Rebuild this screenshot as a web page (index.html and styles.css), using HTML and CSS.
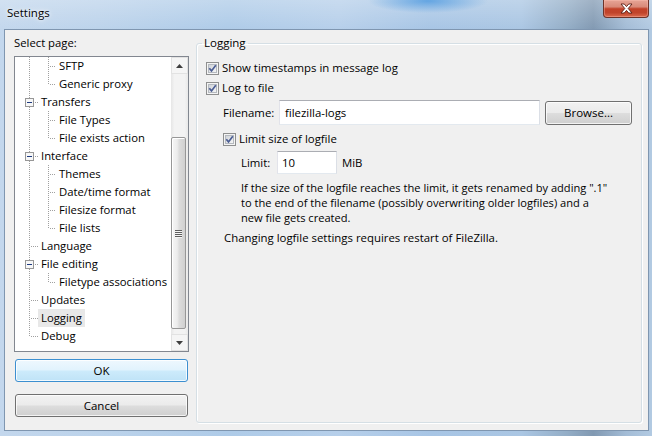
FILE: index.html
```html
<!DOCTYPE html>
<html>
<head>
<meta charset="utf-8">
<title>Settings</title>
<link rel="stylesheet" href="styles.css">
</head>
<body>
<div class="window">
  <div class="titlebar">
    <span class="title">Settings</span>
    <div class="close-btn">
      <svg width="13" height="11" viewBox="0 0 13 11"><path d="M1 1 H4.3 L6.5 3.6 L8.7 1 H12 L8.2 5.5 L12 10 H8.7 L6.5 7.4 L4.3 10 H1 L4.8 5.5 Z" fill="#fff" stroke="#5a1d14" stroke-width="0.9" stroke-linejoin="round"/></svg>
    </div>
  </div>
  <div class="client">
    <div class="left">
      <div class="caption">Select page:</div>
      <div class="tree">
        <div class="tree-items">
          <div class="row"><span class="g0 v"></span><span class="g1 t"></span><span class="item">SFTP</span></div>
          <div class="row"><span class="g0 v"></span><span class="g1 l"></span><span class="item">Generic proxy</span></div>
          <div class="row"><span class="g0 t"><svg class="exp" width="9" height="9" viewBox="0 0 9 9"><rect x=".5" y=".5" width="8" height="8" fill="#f7f7f7" stroke="#979797"/><path d="M2 4.5 H7" stroke="#1d3a80"/></svg></span><span class="item">Transfers</span></div>
          <div class="row"><span class="g0 v"></span><span class="g1 t"></span><span class="item">File Types</span></div>
          <div class="row"><span class="g0 v"></span><span class="g1 l"></span><span class="item">File exists action</span></div>
          <div class="row"><span class="g0 t"><svg class="exp" width="9" height="9" viewBox="0 0 9 9"><rect x=".5" y=".5" width="8" height="8" fill="#f7f7f7" stroke="#979797"/><path d="M2 4.5 H7" stroke="#1d3a80"/></svg></span><span class="item">Interface</span></div>
          <div class="row"><span class="g0 v"></span><span class="g1 t"></span><span class="item">Themes</span></div>
          <div class="row"><span class="g0 v"></span><span class="g1 t"></span><span class="item">Date/time format</span></div>
          <div class="row"><span class="g0 v"></span><span class="g1 t"></span><span class="item">Filesize format</span></div>
          <div class="row"><span class="g0 v"></span><span class="g1 l"></span><span class="item">File lists</span></div>
          <div class="row"><span class="g0 t"></span><span class="item">Language</span></div>
          <div class="row"><span class="g0 t"><svg class="exp" width="9" height="9" viewBox="0 0 9 9"><rect x=".5" y=".5" width="8" height="8" fill="#f7f7f7" stroke="#979797"/><path d="M2 4.5 H7" stroke="#1d3a80"/></svg></span><span class="item">File editing</span></div>
          <div class="row"><span class="g0 v"></span><span class="g1 l"></span><span class="item">Filetype associations</span></div>
          <div class="row"><span class="g0 t"></span><span class="item">Updates</span></div>
          <div class="row"><span class="g0 t"></span><span class="item selected">Logging</span></div>
          <div class="row"><span class="g0 l"></span><span class="item">Debug</span></div>
        </div>
        <div class="vscroll">
          <div class="sb-btn"><svg width="7" height="4" viewBox="0 0 7 4"><path d="M3.5 0 L7 4 H0 Z" fill="#3e3e3e"/></svg></div>
          <div class="sb-track">
            <div class="sb-thumb"><span class="grip"></span></div>
          </div>
          <div class="sb-btn"><svg width="7" height="4" viewBox="0 0 7 4"><path d="M0 0 H7 L3.5 4 Z" fill="#3e3e3e"/></svg></div>
        </div>
      </div>
      <button class="btn btn-default ok">OK</button>
      <button class="btn cancel">Cancel</button>
    </div>
    <fieldset class="group">
      <legend>Logging</legend>
      <div class="group-body">
        <div class="chk-row">
          <svg class="cb" width="13" height="13" viewBox="0 0 13 13"><defs><linearGradient id="cbg" x1="0" y1="0" x2="1" y2="1"><stop offset="0" stop-color="#cdd1d6"/><stop offset="1" stop-color="#f8f8f8"/></linearGradient></defs><rect x=".5" y=".5" width="12" height="12" fill="#f4f4f4" stroke="#8e8f8f"/><rect x="2.5" y="2.5" width="8" height="8" fill="url(#cbg)" stroke="#b5b9bf"/><path d="M3.3 6.3 L5.5 8.9 L9.8 3.3" fill="none" stroke="#4b5d93" stroke-width="1.7"/></svg>
          <span>Show timestamps in message log</span>
        </div>
        <div class="chk-row">
          <svg class="cb" width="13" height="13" viewBox="0 0 13 13"><rect x=".5" y=".5" width="12" height="12" fill="#f4f4f4" stroke="#8e8f8f"/><rect x="2.5" y="2.5" width="8" height="8" fill="url(#cbg)" stroke="#b5b9bf"/><path d="M3.3 6.3 L5.5 8.9 L9.8 3.3" fill="none" stroke="#4b5d93" stroke-width="1.7"/></svg>
          <span>Log to file</span>
        </div>
        <div class="file-row">
          <span class="file-label">Filename:</span>
          <span class="input file-input">filezilla-logs</span>
          <button class="btn browse">Browse...</button>
        </div>
        <div class="chk-row sub">
          <svg class="cb" width="13" height="13" viewBox="0 0 13 13"><rect x=".5" y=".5" width="12" height="12" fill="#f4f4f4" stroke="#8e8f8f"/><rect x="2.5" y="2.5" width="8" height="8" fill="url(#cbg)" stroke="#b5b9bf"/><path d="M3.3 6.3 L5.5 8.9 L9.8 3.3" fill="none" stroke="#4b5d93" stroke-width="1.7"/></svg>
          <span>Limit size of logfile</span>
        </div>
        <div class="limit-row">
          <span class="limit-label">Limit:</span>
          <span class="input limit-input">10</span>
          <span class="unit">MiB</span>
        </div>
        <p class="note">If the size of the logfile reaches the limit, it gets renamed by adding ".1"<br>to the end of the filename (possibly overwriting older logfiles) and a<br>new file gets created.</p>
        <p class="restart">Changing logfile settings requires restart of FileZilla.</p>
      </div>
    </fieldset>
  </div>
</div>
</body>
</html>
```

FILE: styles.css
```css
html, body {
  margin: 0;
  padding: 0;
}

body {
  width: 652px;
  height: 436px;
  overflow: hidden;
  font-family: "Open Sans", "Noto Sans", "DejaVu Sans", sans-serif;
  font-size: 11px;
  color: #000;
}

.window {
  width: 652px;
  height: 436px;
  display: flex;
  flex-direction: column;
  background:
    radial-gradient(ellipse 60px 12px at 428px 1px, rgba(90, 160, 225, 0.9), rgba(90, 160, 225, 0)),
    linear-gradient(to bottom, rgba(255, 255, 255, 0.25), rgba(255, 255, 255, 0) 30px),
    linear-gradient(to right, #c3d7ed 0%, #bcd3eb 15%, #aecbe8 35%, #b6cfea 52%, #a7c5e5 66%, #aac6e3 80%, #93adc6 87%, #8199b2 91%, #a3bcd6 96%, #b2cae2 100%);
}

.titlebar {
  height: 29px;
  flex: none;
  display: flex;
  align-items: flex-start;
}

.title {
  margin: 5px 0 0 7px;
  line-height: 16px;
  font-size: 11.5px;
  text-shadow: 0 0 6px rgba(255, 255, 255, 0.9), 0 0 3px rgba(255, 255, 255, 0.9);
}

.close-btn {
  margin-left: auto;
  margin-right: 3px;
  width: 46px;
  height: 18px;
  box-sizing: border-box;
  border: 1px solid #6d3329;
  border-top: none;
  border-radius: 0 0 4px 4px;
  background: linear-gradient(to bottom, #e7a596 0%, #d98a79 40%, #c24128 52%, #c0442b 75%, #dc6a4d 100%);
  box-shadow: inset 0 0 0 1px rgba(255, 200, 190, 0.35);
  display: flex;
  align-items: center;
  justify-content: center;
}

.client {
  margin: 0 3px 0 4px;
  height: 402px;
  box-sizing: border-box;
  border: 1px solid #7f96b0;
  background: #f0f0f0;
  display: flex;
  align-items: flex-start;
}

.left {
  width: 175px;
  margin-left: 9px;
  padding-top: 5px;
  display: flex;
  flex-direction: column;
  flex: none;
}

.caption {
  line-height: 16px;
  height: 16px;
  font-size: 11.3px;
}

.tree {
  margin-top: 5px;
  height: 296px;
  box-sizing: border-box;
  border: 1px solid #828790;
  background: #fff;
  display: flex;
}

.tree-items {
  width: 156px;
  overflow: hidden;
  flex: none;
}

.row {
  height: 18px;
  display: flex;
  align-items: center;
}

.g0, .g1 {
  height: 18px;
  flex: none;
  display: flex;
  align-items: center;
}

.g0 { width: 23px; }
.g1 { width: 18px; }

.g0.v {
  background: repeating-linear-gradient(to bottom, #a0a0a0 0 1px, transparent 1px 2px) 14px 0 / 1px 18px no-repeat;
}

.g0.t {
  background:
    repeating-linear-gradient(to bottom, #a0a0a0 0 1px, transparent 1px 2px) 14px 0 / 1px 18px no-repeat,
    repeating-linear-gradient(to right, #a0a0a0 0 1px, transparent 1px 2px) 16px 9px / 7px 1px no-repeat;
}

.g0.l {
  background:
    repeating-linear-gradient(to bottom, #a0a0a0 0 1px, transparent 1px 2px) 14px 0 / 1px 10px no-repeat,
    repeating-linear-gradient(to right, #a0a0a0 0 1px, transparent 1px 2px) 16px 9px / 7px 1px no-repeat;
}

.g1.t {
  background:
    repeating-linear-gradient(to bottom, #a0a0a0 0 1px, transparent 1px 2px) 10px 0 / 1px 18px no-repeat,
    repeating-linear-gradient(to right, #a0a0a0 0 1px, transparent 1px 2px) 12px 9px / 6px 1px no-repeat;
}

.g1.l {
  background:
    repeating-linear-gradient(to bottom, #a0a0a0 0 1px, transparent 1px 2px) 10px 0 / 1px 10px no-repeat,
    repeating-linear-gradient(to right, #a0a0a0 0 1px, transparent 1px 2px) 12px 9px / 6px 1px no-repeat;
}

.exp {
  margin-left: 10px;
  display: block;
}

.item {
  padding: 0 3px;
  line-height: 18px;
  height: 18px;
  white-space: nowrap;
  font-size: 11.3px;
}

.item.selected {
  background: #e8e8e8;
}

.vscroll {
  width: 17px;
  flex: none;
  display: flex;
  flex-direction: column;
  background: linear-gradient(to right, #e6e6e6 0%, #f3f3f3 20%, #f3f3f3 80%, #e9e9e9 100%);
}

.sb-btn {
  height: 17px;
  box-sizing: border-box;
  border: 1px solid #e2e2e2;
  background: #f5f5f5;
  display: flex;
  align-items: center;
  justify-content: center;
  flex: none;
}

.sb-track {
  flex: 1;
  display: flex;
  flex-direction: column;
}

.sb-thumb {
  margin: 63px 2px 0 0;
  height: 192px;
  box-sizing: border-box;
  border: 1px solid #979797;
  border-radius: 2px;
  background: linear-gradient(to right, #f6f6f6 0%, #ececec 40%, #dcdcdc 55%, #d0d0d0 100%);
  box-shadow: inset 1px 1px 0 #fff;
  display: flex;
  align-items: center;
  justify-content: center;
}

.grip {
  width: 7px;
  height: 8px;
  margin-top: 2px;
  background: repeating-linear-gradient(to bottom, #5e5e5e 0 1px, #f4f4f4 1px 2px);
}

.btn {
  font-family: inherit;
  font-size: 11.5px;
  color: #000;
  height: 23px;
  padding: 0;
  box-sizing: border-box;
  border: 1px solid #707070;
  border-radius: 3px;
  background: linear-gradient(to bottom, #f2f2f2 0%, #ebebeb 48%, #dddddd 52%, #cfcfcf 100%);
  box-shadow: inset 0 0 0 1px rgba(255, 255, 255, 0.75);
}

.btn-default {
  border-color: #3c8fd0;
  background: linear-gradient(to bottom, #eef8fe 0%, #e1f3fd 48%, #cdebfb 52%, #bfe3f7 100%);
  box-shadow: inset 0 0 0 1px rgba(255, 255, 255, 0.8);
}

.ok {
  margin-top: 7px;
  width: 173px;
  margin-left: 1px;
}

.cancel {
  margin-top: 12px;
  width: 173px;
  margin-left: 1px;
}

.group {
  margin: 5px 0 0 7px;
  padding: 0;
  width: 446px;
  height: 388px;
  box-sizing: border-box;
  border: 1px solid #d5dfe5;
  border-radius: 3px;
  box-shadow: inset 1px 1px 0 #fff, 1px 1px 0 #fff;
  min-width: 0;
}

.group legend {
  margin-left: 5px;
  padding: 0 2px;
  line-height: 16px;
  font-size: 11.5px;
}

.group-body {
  padding: 9px 0 0 9px;
}

.chk-row {
  display: flex;
  align-items: center;
  gap: 3px;
  height: 16px;
  margin-bottom: 4px;
  line-height: 16px;
  font-size: 11.4px;
}

.cb {
  display: block;
  flex: none;
}

.chk-row.sub {
  padding-left: 17px;
  margin-top: 6px;
}

.file-row {
  display: flex;
  align-items: center;
  height: 25px;
  padding-left: 17px;
  font-size: 11.4px;
}

.file-label {
  width: 56px;
  flex: none;
}

.input {
  box-sizing: border-box;
  background: #fff;
  border: 1px solid;
  border-color: #abadb3 #dbdfe6 #e3e9ef #e2e3ea;
  display: flex;
  align-items: center;
  font-size: 11.4px;
}

.file-input {
  width: 261px;
  height: 25px;
  padding-left: 5px;
}

.browse {
  margin-left: 5px;
  width: 87px;
  height: 24px;
}

.limit-row {
  display: flex;
  align-items: center;
  height: 23px;
  padding-left: 35px;
  font-size: 11.4px;
}

.limit-label {
  width: 36px;
  flex: none;
}

.limit-input {
  width: 60px;
  height: 23px;
  padding-left: 4px;
}

.unit {
  margin-left: 5px;
}

.note {
  margin: 6px 0 0 0;
  padding-left: 35px;
  line-height: 15px;
  font-size: 11.1px;
  white-space: nowrap;
}

.restart {
  margin: 5px 0 0 0;
  padding-left: 18px;
  line-height: 16px;
  font-size: 11.4px;
}
```
